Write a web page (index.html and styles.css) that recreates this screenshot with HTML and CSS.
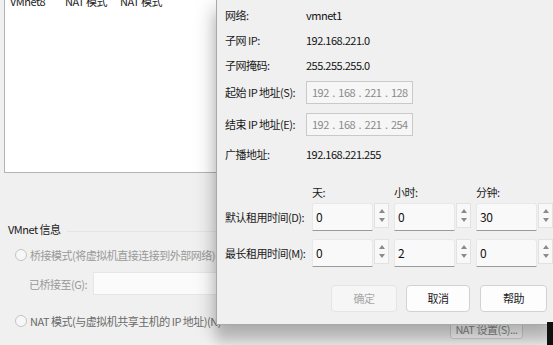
FILE: index.html
```html
<!DOCTYPE html>
<html lang="zh">
<head>
<meta charset="utf-8">
<link rel="stylesheet" href="styles.css">
</head>
<body>
<div class="window">
  <div class="list">
    <div class="list-row"><span class="c1">VMnet8</span><span class="c2">NAT 模式</span><span class="c3">NAT 模式</span></div>
  </div>
  <div class="group-title"><span>VMnet 信息</span><span class="group-line"></span></div>
  <div class="radio-row disabled"><span class="radio"></span><span>桥接模式(将虚拟机直接连接到外部网络)(B)</span></div>
  <div class="bridge-row disabled"><span class="bridge-label">已桥接至(G):</span><span class="bridge-select"></span></div>
  <div class="radio-row nat"><span class="radio"></span><span class="nat-text">NAT 模式(与虚拟机共享主机的 IP 地址)(N)</span><span class="nat-btn">NAT 设置(S)...</span></div>
</div>

<div class="dialog">
  <div class="info">
    <span class="lbl">网络:</span><span class="val">vmnet1</span>
    <span class="lbl">子网 IP:</span><span class="val">192.168.221.0</span>
    <span class="lbl">子网掩码:</span><span class="val">255.255.255.0</span>
    <span class="lbl">起始 IP 地址(S):</span><span class="ipbox">192 . 168 . 221 . 128</span>
    <span class="lbl">结束 IP 地址(E):</span><span class="ipbox">192 . 168 . 221 . 254</span>
    <span class="lbl">广播地址:</span><span class="val">192.168.221.255</span>
  </div>
  <div class="lease lease-head"><span></span><span>天:</span><span>小时:</span><span>分钟:</span></div>
  <div class="lease lease-row first">
    <span class="lbl">默认租用时间(D):</span>
    <div class="spin"><span class="spin-input">0</span><span class="spin-btns"><span class="up"></span><span class="down"></span></span></div>
    <div class="spin"><span class="spin-input">0</span><span class="spin-btns"><span class="up"></span><span class="down"></span></span></div>
    <div class="spin"><span class="spin-input">30</span><span class="spin-btns"><span class="up"></span><span class="down"></span></span></div>
  </div>
  <div class="lease lease-row second">
    <span class="lbl">最长租用时间(M):</span>
    <div class="spin"><span class="spin-input">0</span><span class="spin-btns"><span class="up"></span><span class="down"></span></span></div>
    <div class="spin"><span class="spin-input">2</span><span class="spin-btns"><span class="up"></span><span class="down"></span></span></div>
    <div class="spin"><span class="spin-input">0</span><span class="spin-btns"><span class="up"></span><span class="down"></span></span></div>
  </div>
  <div class="buttons">
    <span class="btn ok">确定</span>
    <span class="btn cancel">取消</span>
    <span class="btn help">帮助</span>
  </div>
</div>

<div class="desk"></div>
</body>
</html>
```

FILE: styles.css
```css
* { box-sizing: border-box; }
html, body { margin: 0; padding: 0; }
body {
  width: 553px;
  height: 345px;
  overflow: hidden;
  position: relative;
  background: #f0f0f0;
  font-family: "Noto Sans CJK SC", "Noto Sans", sans-serif;
  font-size: 11px;
  letter-spacing: -0.5px;
  color: #161616;
}

/* background window */
.window { display: flex; flex-direction: column; }
.list {
  margin: -7px 0 0 4px;
  width: 300px;
  height: 180px;
  background: #fff;
  border: 1px solid #b4b4b4;
}
.list-row { display: flex; height: 14px; line-height: 14px; padding-left: 5px; color: #222; }
.c1, .c2 { width: 55px; }

.group-title {
  margin-top: 49px;
  height: 14px;
  line-height: 14px;
  padding-left: 8px;
  display: flex;
  align-items: center;
  gap: 6px;
  color: #1a1a1a;
}
.group-line { flex: 1; height: 1px; background: #e4e4e4; margin-top: 4px; }

.radio-row {
  display: flex;
  align-items: center;
  gap: 3px;
  height: 16px;
  padding-left: 15px;
  margin-top: 11px;
}
.radio {
  width: 12px;
  height: 12px;
  border-radius: 50%;
  border: 1px solid #c4c4c4;
  background: #f7f7f7;
  flex: none;
}
.disabled { color: #999; }
.bridge-row { display: flex; height: 23px; margin-top: 9px; align-items: center; }
.bridge-label { width: 93px; padding-left: 29px; }
.bridge-select { width: 200px; height: 23px; background: #fbfbfb; border: 1px solid #e6e6e6; }

.radio-row.nat { margin-top: 18px; color: #6a6a6a; width: 523px; }
.nat-text { flex: 1; }
.nat-btn {
  align-self: flex-start;
  margin-top: 6px;
  width: 73px;
  height: 20px;
  line-height: 18px;
  text-align: center;
  background: #fbfbfb;
  border: 1px solid #d4d4d4;
  border-radius: 3px;
  color: #8a8a8a;
  flex: none;
}

/* dialog overlay */
.dialog {
  position: absolute;
  left: 216px;
  top: -1px;
  width: 340px;
  z-index: 2;
  background: #f0f0f0;
  border: 1px solid #a9a9a9;
  padding: 3px 8px 12px 8px;
  box-shadow: -3px 8px 18px rgba(0, 0, 0, 0.22), 0 18px 10px rgba(0, 0, 0, 0.12);
}
.info {
  display: grid;
  grid-template-columns: 81px 107px;
  grid-template-rows: 24px 25px 26px 28px 36px 24px;
  align-items: center;
}
.lbl { color: #1a1a1a; white-space: nowrap; }
.val { color: #111; }
.ipbox {
  height: 23px;
  line-height: 21px;
  padding-left: 5px;
  background: #f6f6f6;
  border: 1px solid #c9c9c9;
  color: #8a8a8a;
  white-space: pre;
  word-spacing: 1.5px;
}

.lease {
  display: grid;
  grid-template-columns: 82px 77px 77px 77px;
  column-gap: 5px;
  align-items: center;
}
.lease-head { margin-top: 17px; height: 18px; line-height: 18px; color: #1a1a1a; }
.lease-row { height: 28px; }
.lease-row.first { margin-top: 2px; }
.lease-row.second { margin-top: 8px; }
.spin { display: flex; gap: 1px; height: 28px; align-items: flex-start; }
.spin-input {
  flex: 1;
  height: 28px;
  line-height: 25px;
  padding-left: 3px;
  background: #f9f9f9;
  border: 1px solid #e8e8e8;
  border-bottom: 1px solid #9a9a9a;
  border-radius: 3px 3px 0 0;
  color: #111;
  font-size: 12px;
}
.spin-btns {
  width: 15px;
  height: 25px;
  border: 1px solid #e2e2e2;
  background: #f8f8f8;
  display: flex;
  flex-direction: column;
  align-items: center;
  justify-content: center;
  gap: 5px;
}
.up, .down { width: 0; height: 0; border-left: 3px solid transparent; border-right: 3px solid transparent; }
.up { border-bottom: 4px solid #8a8a8a; }
.down { border-top: 4px solid #8a8a8a; }

.buttons { display: flex; justify-content: flex-end; margin-top: 18px; height: 27px; }
.btn {
  height: 27px;
  line-height: 25px;
  text-align: center;
  background: #fdfdfd;
  border: 1px solid #d2d2d2;
  border-radius: 4px;
  color: #1a1a1a;
}
.ok { width: 66px; margin-right: 9px; background: #f6f6f6; border-color: #e4e4e4; color: #a8a8a8; }
.cancel { width: 64px; margin-right: 10px; }
.help { width: 67px; }

.desk {
  position: absolute;
  right: 0;
  bottom: 0;
  width: 6px;
  height: 23px;
  background: #111;
  z-index: 3;
}
```
